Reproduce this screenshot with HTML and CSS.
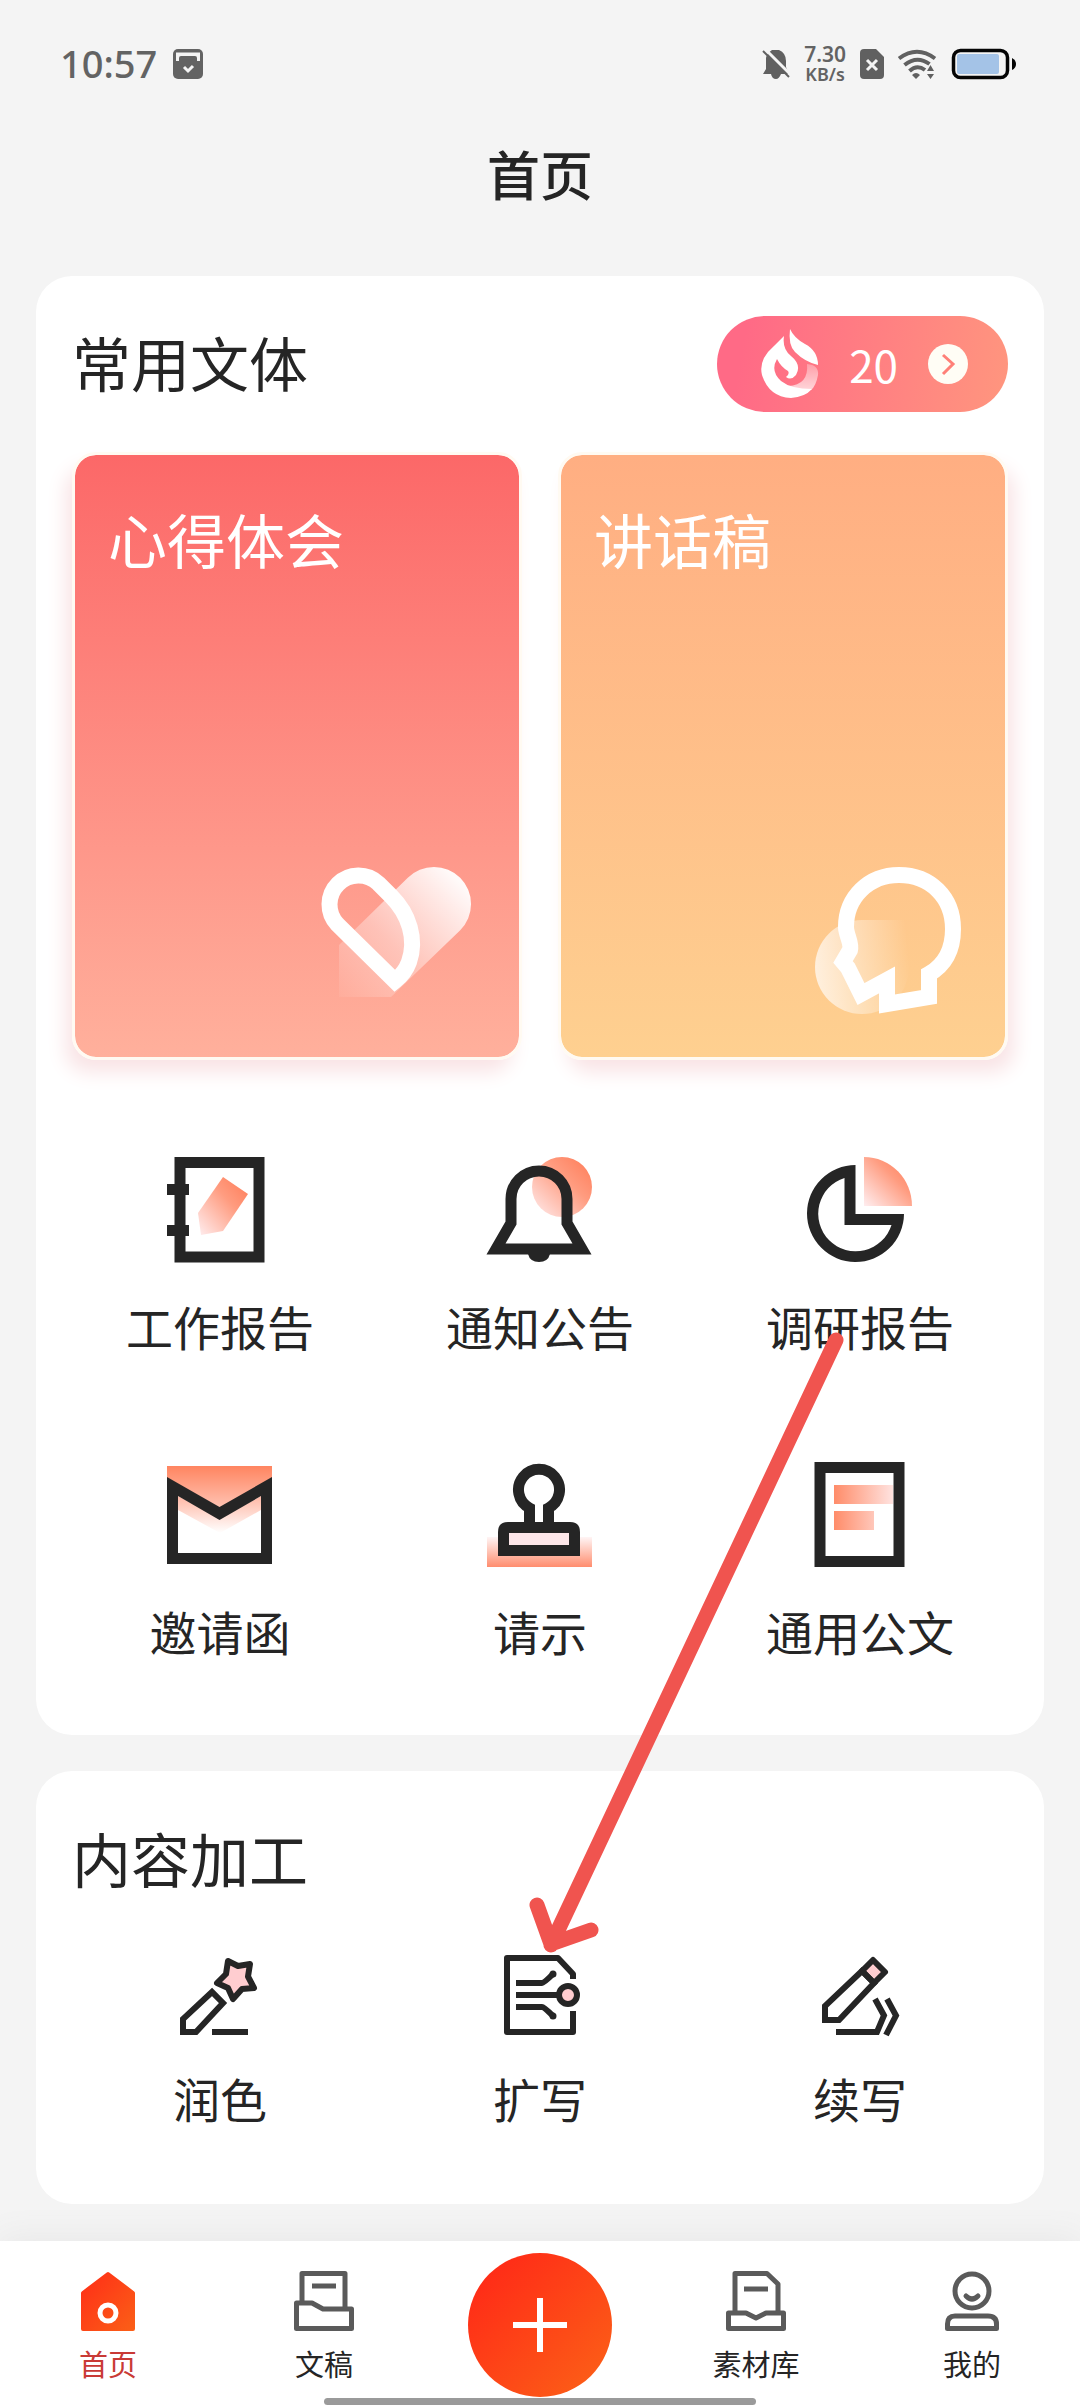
FILE: index.html
```html
<!DOCTYPE html>
<html lang="zh-CN">
<head>
<meta charset="utf-8">
<meta name="viewport" content="width=device-width">
<title>首页</title>
<link rel="stylesheet" href="styles.css">
</head>
<body>
<svg class="defs" width="0" height="0" aria-hidden="true">
  <defs>
    <linearGradient id="coral-tr" x1="1" y1="0" x2="0" y2="1"><stop offset="0" stop-color="#ff7a55"/><stop offset=".4" stop-color="#ff9c80"/><stop offset="1" stop-color="#ffeef0"/></linearGradient>
    <linearGradient id="coral-down" x1="0" y1="0" x2="0" y2="1"><stop offset="0" stop-color="#ff8560"/><stop offset="1" stop-color="#ffc4b4"/></linearGradient>
    <linearGradient id="coral-fade" x1="0" y1="0" x2="0" y2="1"><stop offset="0" stop-color="#ffb7a4"/><stop offset="1" stop-color="#ffffff"/></linearGradient>
    <linearGradient id="coral-up" x1="0" y1="1" x2="0" y2="0"><stop offset="0" stop-color="#ff8d6e"/><stop offset="1" stop-color="#fff5f5"/></linearGradient>
    <linearGradient id="coral-right" x1="0" y1="0" x2="1" y2="0"><stop offset="0" stop-color="#ff8c69"/><stop offset="1" stop-color="#ffe3e0"/></linearGradient>
    <linearGradient id="white-tr" x1="1" y1="0" x2="0" y2="1"><stop offset=".1" stop-color="#fff" stop-opacity=".95"/><stop offset=".6" stop-color="#fff" stop-opacity=".35"/><stop offset="1" stop-color="#fff" stop-opacity=".05"/></linearGradient>
    <linearGradient id="white-left" x1="0" y1=".5" x2="1" y2=".4"><stop offset="0" stop-color="#fff" stop-opacity=".7"/><stop offset="1" stop-color="#fff" stop-opacity="0"/></linearGradient>
    <linearGradient id="ember" x1="0" y1="1" x2="0" y2="0"><stop offset="0" stop-color="#fff" stop-opacity=".7"/><stop offset="1" stop-color="#fff" stop-opacity=".3"/></linearGradient>
    <linearGradient id="brand" x1="0" y1="0" x2="1" y2="1"><stop offset="0" stop-color="#ff2e17"/><stop offset="1" stop-color="#fb5e17"/></linearGradient>
  </defs>
</svg>

<div class="status">
  <div class="status-group">
    <span class="clock">10:57</span>
    <svg width="30" height="30" viewBox="0 0 30 30"><rect width="30" height="30" rx="5" fill="#636363"/><path d="M3 12V3.500H27V12H24V9Q24 7 22 7H8Q6 7 6 9V12Z" fill="#f4f4f4"/><path d="M8 12V9.500H22V12" fill="none" stroke="#636363" stroke-width="2"/><path d="M11 18L15 22L20 17" fill="none" stroke="#f4f4f4" stroke-width="3"/></svg>
  </div>
  <div class="status-group status-right">
    <svg width="28" height="30" viewBox="0 0 28 30"><path d="M10 1H17Q24 4 24 12V18L27 25H19Q17 30 14 30Q10 30 9 25H1L4 20V10Q4 5 10 1Z" fill="#606060"/><path d="M3 0L29 26" stroke="#f4f4f4" stroke-width="3"/><path d="M1 2L27 28" stroke="#606060" stroke-width="2"/></svg>
    <span class="rate"><span class="rate-num">7.30</span><span>KB/s</span></span>
    <svg width="24" height="30" viewBox="0 0 24 30"><path d="M4 0H16L24 8V26Q24 30 20 30H4Q0 30 0 26V4Q0 0 4 0Z" fill="#606060"/><path d="M7 11L17 21M17 11L7 21" stroke="#f4f4f4" stroke-width="3"/></svg>
    <svg width="40" height="30" viewBox="0 0 40 30"><g fill="none" stroke="#606060" stroke-width="4"><path d="M1 9.500Q19 -4 37 9.500"/><path d="M6.500 16Q19 6 31.500 15"/><path d="M11.500 22Q19 15 27 21"/></g><path d="M14 26Q18 22 22 26L18 30ZM29 22L32.500 16L36 22ZM29 25H36L32.500 30Z" fill="#606060"/></svg>
    <svg width="64" height="30" viewBox="0 0 64 30"><rect x="1.500" y="1.500" width="54" height="27" rx="7" fill="#f4f4f4" stroke="#050505" stroke-width="3.500"/><rect x="5" y="5" width="42" height="20" rx="2" fill="#a4c3e7"/><path d="M60 9Q64 11 64 15T60 21Z" fill="#050505"/></svg>
  </div>
</div>

<header class="title-bar"><h1>首页</h1></header>

<main class="content">
  <section class="panel panel-styles">
    <div class="panel-head">
      <h2>常用文体</h2>
      <button class="pill" type="button" aria-label="20">
        <svg width="58" height="70" viewBox="0 0 58 70"><path d="M23 7Q14 16 7 23Q-2 34 1 46Q8 68 30 69Q44 68 51 60Q30 60 20 52Q9 42 16 30Q20 38 27 42Q29 45 25 48Q30 52 35 46Q41 36 30 27Q21 20 23 7Z" fill="#fff"/><path d="M29 0Q27 16 34 23Q44 33 57 36Q57 22 44 15Q33 9 29 0Z" fill="#fff"/><path d="M46 35Q58 36 57 46Q55 57 50 61Q36 62 27 57Q48 56 46 35Z" fill="url(#ember)"/></svg>
        <span>20</span>
        <svg width="40" height="40" viewBox="0 0 40 40"><circle cx="20" cy="20" r="20" fill="#fffdf5"/><path d="M15 11L25 20L15 30" fill="none" stroke="#ff8078" stroke-width="3"/></svg>
      </button>
    </div>
    <div class="features">
      <button class="feature feature-red" type="button">
        <span>心得体会</span>
        <svg width="150" height="150" viewBox="5 0 150 150"><path d="M86.800 10.800L18 78V130H70L139.200 63.200A37 37 0 0 0 86.800 10.800Z" fill="url(#white-tr)"/><path d="M74 114L16.500 57.500A29 29 0 0 1 57.500 16.500L70 29C88 47 96 72 88 95Q84 106 74 114Z" fill="none" stroke="#fff" stroke-width="16"/></svg>
      </button>
      <button class="feature feature-orange" type="button">
        <span>讲话稿</span>
        <svg width="150" height="150" viewBox="-3 0 150 150"><path d="M47 53H94V100A47 47 0 1 1 47 53Z" fill="url(#white-left)"/><path d="M114 130V107C128 99 138 86 138 62C138 30 115 8 84 8C54 8 31 30 31 60C31 68 37 76 35 83L28 95L33 101L46 127L72 113V137Z" fill="none" stroke="#fff" stroke-width="16"/></svg>
      </button>
    </div>
    <div class="grid grid-docs">
      <button class="tile" type="button">
        <svg width="106" height="106" viewBox="0 0 106 106"><path d="M56 20L81 37L56 74L34 78L31 56Z" fill="url(#coral-tr)"/><rect x="13" y="5.500" width="79" height="94.500" fill="none" stroke="#252525" stroke-width="11"/><path d="M0 27H22V38H0ZM0 68H22V79H0Z" fill="#252525"/></svg>
        <span>工作报告</span>
      </button>
      <button class="tile" type="button">
        <svg width="106" height="106" viewBox="0 0 106 106"><circle cx="75" cy="30" r="30" fill="url(#coral-tr)"/><path d="M24 66V42A28 28 0 0 1 80 42V66L95 92H9Z" fill="none" stroke="#252525" stroke-width="11"/><path d="M41 97H63Q61 105 52 105T41 97Z" fill="#252525"/></svg>
        <span>通知公告</span>
      </button>
      <button class="tile" type="button">
        <svg width="106" height="106" viewBox="0 0 106 106"><path d="M57 0A48 49 0 0 1 105 49H57Z" fill="url(#coral-tr)"/><path d="M48.500 8A48.500 48.500 0 1 0 97 57H48.500ZM37.500 21V68H84.500A37.500 37.500 0 1 1 37.500 21Z" fill="#252525" fill-rule="evenodd"/></svg>
        <span>调研报告</span>
      </button>
      <button class="tile" type="button">
        <svg width="106" height="106" viewBox="0 0 106 106"><path d="M11 34L53 57L94 34V48L53 71L11 48Z" fill="url(#coral-fade)"/><path d="M0 4H105V16L53 46L0 16Z" fill="url(#coral-down)"/><path d="M0 15L52.500 45L105 15V102H0ZM11 34V91H94V34L52.500 58Z" fill="#252525" fill-rule="evenodd"/></svg>
        <span>邀请函</span>
      </button>
      <button class="tile" type="button">
        <svg width="106" height="106" viewBox="0 0 106 106"><path d="M0 75H105V105H0Z" fill="url(#coral-up)"/><path d="M42.500 66V46A20.500 20.500 0 1 1 61.500 46V66" fill="none" stroke="#252525" stroke-width="11"/><path d="M11 94V70Q11 60 21 60H83Q93 60 93 70V94Z" fill="#252525"/><path d="M22 71H82V83H22Z" fill="#fde6e8"/></svg>
        <span>请示</span>
      </button>
      <button class="tile" type="button">
        <svg width="106" height="106" viewBox="0 0 106 106"><path d="M27 23H86V42H27ZM27 49H67V68H27Z" fill="url(#coral-right)"/><rect x="13" y="5.500" width="79" height="94" fill="none" stroke="#252525" stroke-width="11"/></svg>
        <span>通用公文</span>
      </button>
    </div>
  </section>

  <section class="panel panel-tools">
    <h2>内容加工</h2>
    <div class="grid">
      <button class="tile" type="button">
        <svg width="80" height="80" viewBox="0 0 80 80" fill="none" stroke="#252525" stroke-width="6"><path d="M48 6L58 11L70 9L68 21.500L74 33L62 34L53 44L48 33L37 28L46 19Z" fill="#ffcdd0" stroke-linejoin="round"/><path d="M3 77V64L32 37L43 48L16 77ZM32 77H68"/></svg>
        <span>润色</span>
      </button>
      <button class="tile" type="button">
        <svg width="80" height="80" viewBox="0 0 80 80" fill="none" stroke="#252525" stroke-width="6" stroke-linejoin="round"><path d="M73 24V19L58 3H7V77H73V56M16 28H42Q44 28 53 19M16 40H58M16 52H42Q44 52 53 61"/><path d="M53 19V19.100M53 61V61.100" stroke-linecap="round" stroke-width="7"/><circle cx="68" cy="40" r="9" fill="#ffcdd0"/></svg>
        <span>扩写</span>
      </button>
      <button class="tile" type="button">
        <svg width="80" height="80" viewBox="0 0 80 80" fill="none" stroke="#252525" stroke-width="6"><path d="M53 5L65 17L54 28L42 16Z" fill="#ffcdd0" stroke-linejoin="round"/><path d="M5 65V51L42 16L54 28L19 65ZM16 77H57L64 60.500L55 44M67 44L76 60.500L66 80"/></svg>
        <span>续写</span>
      </button>
    </div>
  </section>

  <svg class="pointer" width="314" height="632" viewBox="0 0 314 632" aria-hidden="true"><path d="M307 14L22 619M8 579L22 618L62 604" fill="none" stroke="#f0544f" stroke-width="15" stroke-linecap="round" stroke-linejoin="round"/></svg>
</main>

<nav class="tabs">
  <a class="tab tab-active" href="#home">
    <svg width="60" height="60" viewBox="0 0 60 60"><path d="M30 3L55 22V58H5V22Z" fill="url(#brand)" stroke="url(#brand)" stroke-width="4" stroke-linejoin="round"/><circle cx="30" cy="42" r="8" fill="none" stroke="#fff" stroke-width="5"/></svg>
    <span>首页</span>
  </a>
  <a class="tab" href="#drafts">
    <svg width="60" height="60" viewBox="0 0 60 60" fill="none" stroke="#5a5a5a" stroke-width="5" stroke-linejoin="round"><path d="M8 32V2.500H51V38M18 15H42M2.500 32H18L29 38H57.500V57.500H2.500Z"/></svg>
    <span>文稿</span>
  </a>
  <button class="add" type="button" aria-label="新建">
    <svg width="54" height="54" viewBox="0 0 54 54"><path d="M27 0V54M0 27H54" stroke="#fff" stroke-width="6"/></svg>
  </button>
  <a class="tab" href="#library">
    <svg width="60" height="60" viewBox="0 0 60 60" fill="none" stroke="#5a5a5a" stroke-width="5" stroke-linejoin="round"><path d="M9 41V2.500H41L52 13V41M18 18H42M2.500 42H20L30 47L40 42H57.500V57.500H2.500Z"/></svg>
    <span>素材库</span>
  </a>
  <a class="tab" href="#me">
    <svg width="60" height="60" viewBox="0 0 60 60" fill="none" stroke="#5a5a5a" stroke-width="5" stroke-linejoin="round"><circle cx="30" cy="20" r="17"/><path d="M24 25Q30 31 36 25" stroke-linecap="round"/><path d="M5.500 57.500V53Q5.500 45 13 45H46Q54.500 45 54.500 53V57.500Z"/></svg>
    <span>我的</span>
  </a>
  <div class="home-bar"></div>
</nav>
</body>
</html>
```
FILE: styles.css
```css
* {
  box-sizing: border-box;
}

body {
  margin: 0;
  min-height: 100vh;
  display: flex;
  flex-direction: column;
  background: #f4f4f4;
  color: #252525;
  font-family: "Noto Sans CJK SC", "Noto Sans", sans-serif;
}

svg {
  display: block;
  flex: none;
  overflow: visible;
}

button {
  margin: 0;
  padding: 0;
  border: 0;
  background: none;
  color: inherit;
  font: inherit;
}

h1,
h2 {
  margin: 0;
  line-height: 80px;
}

h1 {
  font-size: 53px;
  font-weight: 500;
  text-align: center;
}

h2 {
  font-size: 59px;
  font-weight: 400;
}

.defs {
  position: absolute;
}

.status {
  height: 128px;
  padding: 0 64px 0 60px;
  display: flex;
  align-items: center;
  justify-content: space-between;
  color: #636363;
  font-family: "Noto Sans", sans-serif;
  font-weight: 500;
}

.status-group {
  display: flex;
  align-items: center;
  gap: 16px;
}

.status-right {
  gap: 14px;
}

.clock {
  padding-bottom: 2px;
  font-size: 38px;
}

.rate {
  display: flex;
  flex-direction: column;
  align-items: center;
  padding-bottom: 2px;
  font-size: 18px;
  font-weight: 600;
  line-height: 18px;
}

.rate-num {
  font-size: 21px;
  line-height: 21px;
}

.title-bar {
  padding: 5px 36px 63px;
}

.content {
  position: relative;
  display: flex;
  flex-direction: column;
  gap: 36px;
  padding: 0 36px 36px;
}

.panel {
  border-radius: 36px;
  background: #fff;
}

.panel-styles {
  padding: 40px 36px 76px;
}

.panel-tools {
  padding: 47px 36px 78px;
}

.panel-head {
  display: flex;
  align-items: center;
  justify-content: space-between;
}

.panel-head h2 {
  padding-bottom: 4px;
}

.pill {
  height: 96px;
  padding: 0 40px 0 44px;
  display: flex;
  align-items: center;
  gap: 30px;
  border-radius: 48px;
  background: linear-gradient(100deg, #ff6a86 10%, #ff967e);
  color: #fff;
  font-size: 44px;
}

.features {
  display: grid;
  grid-template-columns: 1fr 1fr;
  gap: 36px;
  margin-top: 40px;
}

.feature {
  height: 608px;
  padding: 44px 43px 40px 33px;
  display: flex;
  flex-direction: column;
  align-items: flex-start;
  justify-content: space-between;
  border: 3px solid #fffaf2;
  border-radius: 24px;
  background-clip: padding-box;
  color: #fff;
  font-size: 59px;
  line-height: 80px;
}

.feature svg {
  align-self: flex-end;
}

.feature-red {
  background-image: linear-gradient(#fc6868, #ffb09c);
  box-shadow: -8px 14px 20px -2px #f9e3e5;
}

.feature-orange {
  background-image: linear-gradient(#ffae82, #fed090);
  box-shadow: 8px 14px 20px -2px #f9e3e5;
}

.grid {
  display: grid;
  grid-template-columns: repeat(3, 1fr);
  row-gap: 108px;
  margin: 57px -12px 0;
}

.grid-docs {
  margin-top: 97px;
}

.tile {
  display: flex;
  flex-direction: column;
  align-items: center;
  gap: 35px;
  font-size: 47px;
  line-height: 56px;
}

.pointer {
  position: absolute;
  top: 1050px;
  left: 49%;
  pointer-events: none;
}

.tabs {
  position: relative;
  margin-top: auto;
  padding: 12px 0 11px;
  display: grid;
  grid-template-columns: repeat(5, 1fr);
  justify-items: center;
  background: #fff;
  box-shadow: 0 -4px 30px #e8e8e8;
}

.tab {
  padding-top: 18px;
  display: flex;
  flex-direction: column;
  align-items: center;
  gap: 14px;
  color: #252525;
  font-size: 29px;
  line-height: 36px;
  text-decoration: none;
}

.tab-active {
  color: #c93a36;
}

.add {
  width: 144px;
  height: 144px;
  display: grid;
  place-items: center;
  border-radius: 50%;
  background: linear-gradient(135deg, #ff2a17 10%, #fc5d17 90%);
}

.home-bar {
  position: absolute;
  bottom: 3px;
  left: 30%;
  right: 30%;
  height: 7px;
  border-radius: 4px;
  background: #9a9a9a;
}
```
